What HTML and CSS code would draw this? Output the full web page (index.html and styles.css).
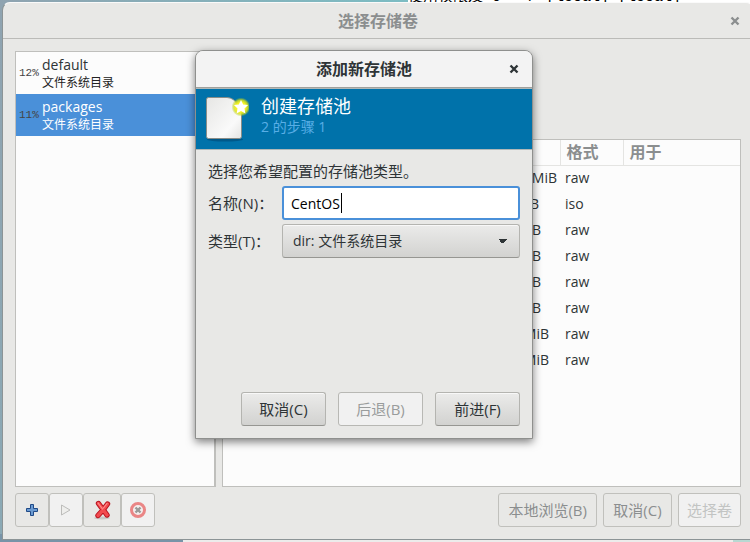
FILE: index.html
```html
<!DOCTYPE html>
<html lang="zh-CN">
<head>
<meta charset="utf-8">
<title>选择存储卷</title>
<link rel="stylesheet" href="styles.css">
</head>
<body>
<div class="terminal"><span>使用权限及 0 &nbsp; / [local] [local]</span></div>
<div class="desk-foot"></div>
<main class="window">
  <header class="titlebar">
    <h1>选择存储卷</h1>
    <button class="close" aria-label="关闭"><svg width="10" height="10" viewBox="0 0 10 10"><path d="M1.5 1.5 8.5 8.5M8.5 1.5 1.5 8.5"/></svg></button>
  </header>
  <div class="content">
    <div class="panes">
      <ul class="pools">
        <li><span class="pct">12%</span><div><div class="pool-name">default</div><div class="pool-type">文件系统目录</div></div></li>
        <li class="selected"><span class="pct">11%</span><div><div class="pool-name">packages</div><div class="pool-type">文件系统目录</div></div></li>
      </ul>
      <div class="volumes">
        <table>
          <thead><tr><th class="size"></th><th class="format">格式</th><th>用于</th></tr></thead>
          <tbody>
            <tr><td class="size wide">MiB</td><td>raw</td><td></td></tr>
            <tr><td class="size short">B</td><td>iso</td><td></td></tr>
            <tr><td class="size">B</td><td>raw</td><td></td></tr>
            <tr><td class="size">B</td><td>raw</td><td></td></tr>
            <tr><td class="size">B</td><td>raw</td><td></td></tr>
            <tr><td class="size">B</td><td>raw</td><td></td></tr>
            <tr><td class="size mid">MiB</td><td>raw</td><td></td></tr>
            <tr><td class="size mid">MiB</td><td>raw</td><td></td></tr>
          </tbody>
        </table>
      </div>
    </div>
    <div class="toolbar">
      <button class="tool" aria-label="添加池"><svg width="16" height="16" viewBox="0 0 16 16"><path d="M6.5 2.5h3v4h4v3h-4v4h-3v-4h-4v-3h4z" fill="#6b9bd2" stroke="#204a87" stroke-linejoin="round"/></svg></button>
      <button class="tool off" aria-label="启动池" disabled><svg width="16" height="16" viewBox="0 0 16 16"><path d="M3.5 3 12 8 3.5 13z" fill="#eeeeec" stroke="#bcbcba" stroke-linejoin="round"/></svg></button>
      <button class="tool big" aria-label="停止池"><svg width="20" height="20" viewBox="0 0 20 20"><ellipse cx="10" cy="18" rx="8" ry="1.5" fill="#c8c8c6"/><path d="M6.5 3.5 11 9.5 15 15M15.5 4 11 10 6 15.5" fill="none" stroke="#b81420" stroke-width="5.4" stroke-linecap="round"/><path d="M6.5 3.5 11 9.5 15 15M15.5 4 11 10 6 15.5" fill="none" stroke="#f24a4e" stroke-width="3.4" stroke-linecap="round"/><path d="M6 3 10.500 9M15 3.500 11.500 8" fill="none" stroke="#ff8f8f" stroke-width="1.200" stroke-linecap="round"/></svg></button>
      <button class="tool off" aria-label="删除池" disabled><svg width="18" height="18" viewBox="0 0 18 18"><circle cx="9" cy="9" r="6.5" fill="#f4eeee" stroke="#ea8686" stroke-width="3"/><path d="m6.5 6.5 5 5m0-5-5 5" stroke="#9a9a98" stroke-width="2.4"/></svg></button>
      <span class="spacer"></span>
      <button class="flat">本地浏览(B)</button>
      <button class="flat">取消(C)</button>
      <button class="flat off" disabled>选择卷</button>
    </div>
  </div>
</main>

<section class="dialog" role="dialog" aria-labelledby="dialog-title">
  <header class="titlebar">
    <h2 id="dialog-title">添加新存储池</h2>
    <button class="close" aria-label="关闭"><svg width="10" height="10" viewBox="0 0 10 10"><path d="M1.5 1.5 8.5 8.5M8.5 1.5 1.5 8.5"/></svg></button>
  </header>
  <div class="banner">
    <svg width="48" height="48" viewBox="0 0 48 48">
      <defs>
        <linearGradient id="paper" x2="1" y2="1"><stop stop-color="#e6e6e4"/><stop offset=".7" stop-color="#fafafa"/><stop offset="1" stop-color="#e4e4e2"/></linearGradient>
        <radialGradient id="glow"><stop offset=".5" stop-color="#f8f420"/><stop offset=".75" stop-color="#d8e218" stop-opacity=".8"/><stop offset="1" stop-color="#a0c020" stop-opacity="0"/></radialGradient>
      </defs>
      <ellipse cx="24" cy="44.5" rx="18" ry="2" fill="#00598a"/>
      <path d="M7.5 2.5H26Q33 3 36 9L40.5 15V41.5Q40.5 43.5 38.5 43.5H7.5Q5.5 43.5 5.5 41.5V4.5Q5.5 2.5 7.5 2.5z" fill="url(#paper)" stroke="#8a8d88"/>
      <circle cx="40" cy="12" r="9.5" fill="url(#glow)"/>
      <path d="m40 5 2.200 4.500 4.900.6-3.600 3.400.9 5-4.400-2.400-4.400 2.400.9-5-3.600-3.400 4.900-.6z" fill="#fff"/>
    </svg>
    <div><div class="step-title">创建存储池</div><div class="step">2 的步骤 1</div></div>
  </div>
  <form class="form">
    <p>选择您希望配置的存储池类型。</p>
    <div class="fields">
      <label for="name">名称(N)：</label>
      <div class="entry"><input id="name" type="text" value="CentOS"><i class="caret"></i></div>
      <label for="type">类型(T)：</label>
      <select id="type"><option>dir: 文件系统目录</option></select>
    </div>
    <div class="actions">
      <button type="button">取消(C)</button>
      <button type="button" disabled>后退(B)</button>
      <button type="button">前进(F)</button>
    </div>
  </form>
</section>
</body>
</html>
```
FILE: styles.css
```css
* { box-sizing: border-box; }
body {
  margin: 0;
  height: 100vh;
  overflow: hidden;
  position: relative;
  display: flex;
  padding: 2px 0 2px 2px;
  background: linear-gradient(100deg, #8fa3b0, #78c3c8 60%, #c0dcd8);
  font: 14px/20px "Open Sans", "Noto Sans CJK SC", sans-serif;
  color: #2e3436;
}
button, input, select { font: inherit; color: inherit; margin: 0; }
h1, h2, p, ul { margin: 0; padding: 0; }

.terminal {
  position: absolute;
  top: 0;
  left: 408px;
  right: 0;
  height: 8px;
  overflow: hidden;
  background: #fff;
}
.terminal span {
  position: absolute;
  bottom: 2px;
  white-space: nowrap;
  font: 15px/16px "Liberation Mono", "Noto Sans CJK SC", monospace;
  color: #000;
}
.desk-foot {
  position: absolute;
  bottom: 0;
  left: 0;
  right: 0;
  height: 8px;
  background: linear-gradient(90deg, #7894a8 183px, #ececeb 183px, #ececeb 733px, #b8d8d2 733px);
}

.window {
  position: relative;
  flex: 1;
  margin-right: -4px;
  display: flex;
  flex-direction: column;
  background: #e8e8e6;
  border: 1px solid #8c9496;
  border-top-color: #fafafa;
  border-radius: 8px 8px 0 0;
}
.titlebar {
  display: flex;
  align-items: center;
  justify-content: center;
  position: relative;
  height: 36px;
  border-bottom: 1px solid #bbbbb8;
}
h1, h2 { font-size: 16px; line-height: 20px; font-weight: 700; }
h1 { color: #8b8e8f; }
.close {
  position: absolute;
  right: 12px;
  width: 12px;
  height: 12px;
  padding: 0;
  display: grid;
  place-items: center;
  border: 0;
  background: none;
}
.close svg { stroke: #2e3436; stroke-width: 2.4; }
.window .close svg { stroke: #8b8e8f; }

.content {
  flex: 1;
  min-height: 0;
  display: flex;
  flex-direction: column;
  gap: 6px;
  padding: 12px;
}
.panes {
  flex: 1;
  min-height: 0;
  display: grid;
  grid-template-columns: 201px 1fr;
  gap: 6px;
}
.pools, .volumes { background: #fcfcfc; border: 1px solid #bfbfbc; }
.pools { list-style: none; border-right-width: 2px; }
.pools li { display: flex; align-items: center; gap: 3px; height: 42px; padding-left: 3px; }
.pct { width: 20px; font: 11px/16px "Liberation Mono", monospace; color: #444; }
.pool-name { line-height: 20px; }
.pool-type { font-size: 12px; line-height: 16px; color: #222; }
.selected { background: #4a90d9; color: #fff; }
.selected .pool-type { color: #fff; }

.volumes { margin-top: 88px; }
table { width: 100%; border-collapse: collapse; table-layout: fixed; }
th { height: 25px; padding: 0 6px; text-align: left; font-size: 16px; line-height: 20px; color: #8b8e8f; border-bottom: 1px solid #e4e4e2; }
th + th { border-left: 1px solid #e4e4e2; }
td { height: 26px; padding: 0 5px; line-height: 20px; }
th.size { width: 337px; }
th.format { width: 63px; }
td.size { text-align: right; padding-right: 19px; }
td.wide { padding-right: 3px; }
td.mid { padding-right: 11px; }
td.short { padding-right: 21px; }

.toolbar { display: flex; height: 34px; }
.spacer { flex: 1; }
.tool, .flat {
  background: #e8e8e6;
  border: 1px solid #c0c0bc;
  border-radius: 3px;
  color: #8b8e8f;
}
.tool { width: 34px; padding: 0; display: grid; place-items: center; }
.big { width: 38px; }
.flat { padding: 0 9px; margin-left: 6px; font-size: 15px; min-width: 69px; }
.flat.off { min-width: 0; padding: 0 8px; color: #c2c4c3; }
.off { background: #f1f1f1; }

.dialog {
  position: absolute;
  left: 195px;
  top: 50px;
  width: 338px;
  background: #e8e8e6;
  border: 1px solid #8f908e;
  border-radius: 8px 8px 0 0;
  box-shadow: 0 3px 9px rgba(0, 0, 0, .5);
}
.dialog .titlebar {
  height: 37px;
  background: #f3f3f3;
  border-bottom: 1px solid #a0a09c;
  border-radius: 7px 7px 0 0;
}
.banner {
  display: flex;
  gap: 12px;
  height: 62px;
  padding: 6px 5px;
  background: #0072aa;
  border: solid #b0b8b8;
  border-width: 1px 0;
  color: #fff;
}
.step-title { font-size: 18px; line-height: 22px; }
.step { font-size: 14px; line-height: 20px; color: #58aee6; }
.form { padding: 11px 12px 12px; }
.form p { font-size: 15px; line-height: 20px; margin-bottom: 5px; }
.fields {
  display: grid;
  grid-template-columns: 70px 1fr;
  gap: 4px;
  align-items: center;
}
.fields label { font-size: 15px; white-space: nowrap; }
.entry { position: relative; }
.caret { position: absolute; left: 59px; top: 7px; width: 1px; height: 20px; background: #000; }
.fields input, .fields select { display: block; width: 100%; height: 34px; border-radius: 3px; }
.fields input { border: 2px solid #4a90d9; background: #fff; padding: 0 7px; outline: 0; color: #000; }
.fields select, .actions button {
  border: 1px solid #b4b4b0;
  border-bottom-color: #969692;
  background: linear-gradient(#ebebea, #d2d2d0);
  box-shadow: inset 0 1px #f8f8f8;
}
.fields select {
  appearance: none;
  padding: 0 10px;
  background:
    linear-gradient(to bottom right, #2e3436 50%, transparent 50%) right 11px center / 5px 5px no-repeat,
    linear-gradient(to bottom left, #2e3436 50%, transparent 50%) right 16px center / 5px 5px no-repeat,
    linear-gradient(#ebebea, #d2d2d0);
}
.actions { display: flex; justify-content: flex-end; gap: 12px; margin-top: 134px; }
.actions button { width: 85px; height: 34px; border-radius: 3px; padding: 0; font-size: 15px; }
.actions button:disabled { background: #f1f1f1; border-color: #b8b8b4; box-shadow: none; color: #999c9c; }
```
